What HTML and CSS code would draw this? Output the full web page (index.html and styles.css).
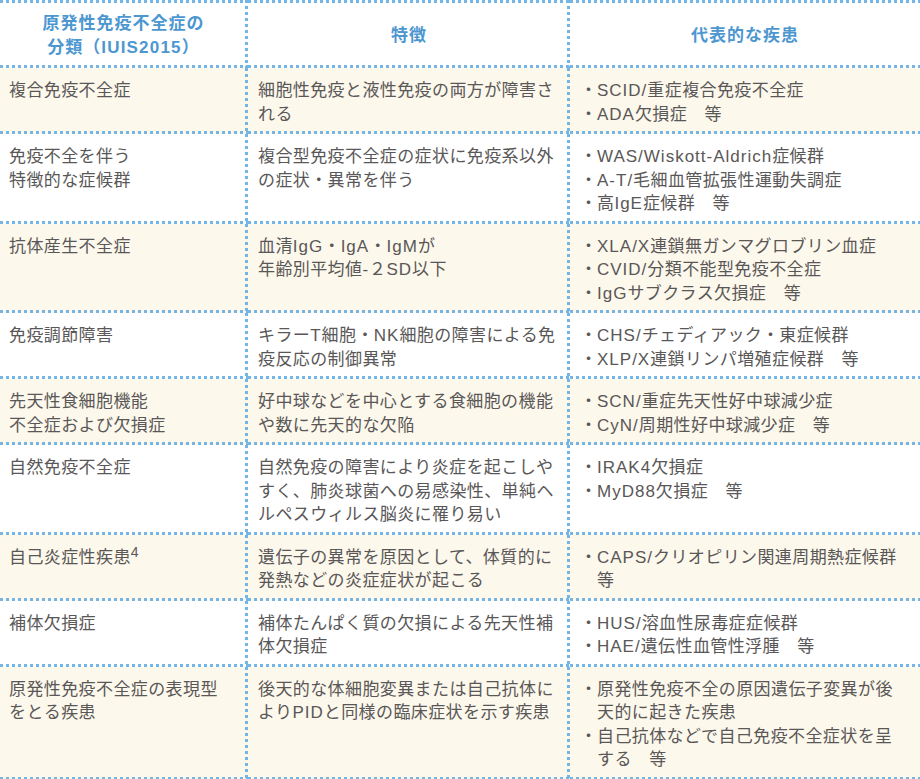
FILE: index.html
```html
<!DOCTYPE html>
<html lang="ja">
<head>
<meta charset="utf-8">
<title>原発性免疫不全症の分類</title>
<link rel="stylesheet" href="styles.css">
</head>
<body>
<table class="pid">
  <colgroup>
    <col class="w1"><col class="w2"><col class="w3">
  </colgroup>
  <thead>
    <tr>
      <th class="cl">原発性免疫不全症の<br>分類（<span class="en">IUIS2015</span>）</th>
      <th class="cm">特徴</th>
      <th class="cr">代表的な疾患</th>
    </tr>
  </thead>
  <tbody>
    <tr class="alt">
      <td class="cl">複合免疫不全症</td>
      <td class="cm">細胞性免疫と液性免疫の両方が障害さ<br>れる</td>
      <td class="cr"><ul class="list"><li><span class="dot">・</span><span><span class="en">SCID/</span>重症複合免疫不全症</span></li><li><span class="dot">・</span><span><span class="en">ADA</span>欠損症　等</span></li></ul></td>
    </tr>
    <tr>
      <td class="cl">免疫不全を伴う<br>特徴的な症候群</td>
      <td class="cm">複合型免疫不全症の症状に免疫系以外<br>の症状・異常を伴う</td>
      <td class="cr"><ul class="list"><li><span class="dot">・</span><span><span class="en">WAS/Wiskott-Aldrich</span>症候群</span></li><li><span class="dot">・</span><span><span class="en">A-T/</span>毛細血管拡張性運動失調症</span></li><li><span class="dot">・</span><span>高<span class="en">IgE</span>症候群　等</span></li></ul></td>
    </tr>
    <tr class="alt">
      <td class="cl">抗体産生不全症</td>
      <td class="cm">血清<span class="en">IgG</span>・<span class="en">IgA</span>・<span class="en">IgM</span>が<br>年齢別平均値<span class="en">-</span>２<span class="en">SD</span>以下</td>
      <td class="cr"><ul class="list"><li><span class="dot">・</span><span><span class="en">XLA/X</span>連鎖無ガンマグロブリン血症</span></li><li><span class="dot">・</span><span><span class="en">CVID/</span>分類不能型免疫不全症</span></li><li><span class="dot">・</span><span><span class="en">IgG</span>サブクラス欠損症　等</span></li></ul></td>
    </tr>
    <tr>
      <td class="cl">免疫調節障害</td>
      <td class="cm">キラー<span class="en">T</span>細胞・<span class="en">NK</span>細胞の障害による免<br>疫反応の制御異常</td>
      <td class="cr"><ul class="list"><li><span class="dot">・</span><span><span class="en">CHS/</span>チェディアック・東症候群</span></li><li><span class="dot">・</span><span><span class="en">XLP/X</span>連鎖リンパ増殖症候群　等</span></li></ul></td>
    </tr>
    <tr class="alt">
      <td class="cl">先天性食細胞機能<br>不全症および欠損症</td>
      <td class="cm">好中球などを中心とする食細胞の機能<br>や数に先天的な欠陥</td>
      <td class="cr"><ul class="list"><li><span class="dot">・</span><span><span class="en">SCN/</span>重症先天性好中球減少症</span></li><li><span class="dot">・</span><span><span class="en">CyN/</span>周期性好中球減少症　等</span></li></ul></td>
    </tr>
    <tr>
      <td class="cl">自然免疫不全症</td>
      <td class="cm">自然免疫の障害により炎症を起こしや<br>すく、肺炎球菌への易感染性、単純ヘ<br>ルペスウィルス脳炎に罹り易い</td>
      <td class="cr"><ul class="list"><li><span class="dot">・</span><span><span class="en">IRAK4</span>欠損症</span></li><li><span class="dot">・</span><span><span class="en">MyD88</span>欠損症　等</span></li></ul></td>
    </tr>
    <tr class="alt">
      <td class="cl">自己炎症性疾患<sup class="ref">4</sup></td>
      <td class="cm">遺伝子の異常を原因として、体質的に<br>発熱などの炎症症状が起こる</td>
      <td class="cr"><ul class="list"><li><span class="dot">・</span><span><span class="en">CAPS/</span>クリオピリン関連周期熱症候群<br>等</span></li></ul></td>
    </tr>
    <tr>
      <td class="cl">補体欠損症</td>
      <td class="cm">補体たんぱく質の欠損による先天性補<br>体欠損症</td>
      <td class="cr"><ul class="list"><li><span class="dot">・</span><span><span class="en">HUS/</span>溶血性尿毒症症候群</span></li><li><span class="dot">・</span><span><span class="en">HAE/</span>遺伝性血管性浮腫　等</span></li></ul></td>
    </tr>
    <tr class="alt">
      <td class="cl">原発性免疫不全症の表現型<br>をとる疾患</td>
      <td class="cm">後天的な体細胞変異または自己抗体に<br>より<span class="en">PID</span>と同様の臨床症状を示す疾患</td>
      <td class="cr"><ul class="list"><li><span class="dot">・</span><span>原発性免疫不全の原因遺伝子変異が後<br>天的に起きた疾患</span></li><li><span class="dot">・</span><span>自己抗体などで自己免疫不全症状を呈<br>する　等</span></li></ul></td>
    </tr>
  </tbody>
</table>
</body>
</html>
```

FILE: styles.css
```css
html, body {
  margin: 0;
  padding: 0;
  background: #ffffff;
}

body {
  font-family: "Noto Sans CJK JP", "Noto Sans", sans-serif;
  font-size: 17px;
  line-height: 23.5px;
  letter-spacing: 0.4px;
  color: #595757;
}

.en {
  font-family: "Liberation Sans", "Noto Sans CJK JP", sans-serif;
  letter-spacing: 1px;
  line-height: 1;
}

.pid {
  width: 920px;
  table-layout: fixed;
  border-collapse: separate;
  border-spacing: 0;
}

.w1 { width: 248px; }
.w2 { width: 322px; }
.w3 { width: 350px; }

.pid th,
.pid td {
  white-space: nowrap;
  vertical-align: top;
  text-align: left;
  padding: 9px 10px 10px 10px;
  background-image: linear-gradient(to right, #74b5e6 0 3px, transparent 3px 6px);
  background-size: 6px 3px;
  background-repeat: repeat-x;
  background-position: left bottom;
}

.pid td.cl,
.pid th.cl {
  padding-left: 9px;
}

.pid .cl,
.pid .cm {
  background-image:
    linear-gradient(to right, #74b5e6 0 3px, transparent 3px 6px),
    linear-gradient(to bottom, #74b5e6 0 3px, transparent 3px 6px);
  background-size: 6px 3px, 3px 6px;
  background-repeat: repeat-x, repeat-y;
  background-position: left bottom, right top;
}

.pid th {
  color: #4d97d1;
  font-weight: 700;
  letter-spacing: 1px;
  text-align: center;
  vertical-align: middle;
  padding: 10px 10px 11px 10px;
  background-image:
    linear-gradient(to right, #74b5e6 0 3px, transparent 3px 6px),
    linear-gradient(to right, #74b5e6 0 3px, transparent 3px 6px);
  background-size: 6px 3px, 6px 3px;
  background-repeat: repeat-x, repeat-x;
  background-position: left bottom, left top;
}

.pid th .en {
  letter-spacing: 1.2px;
}

.pid th.cl,
.pid th.cm {
  background-image:
    linear-gradient(to right, #74b5e6 0 3px, transparent 3px 6px),
    linear-gradient(to right, #74b5e6 0 3px, transparent 3px 6px),
    linear-gradient(to bottom, #74b5e6 0 3px, transparent 3px 6px);
  background-size: 6px 3px, 6px 3px, 3px 6px;
  background-repeat: repeat-x, repeat-x, repeat-y;
  background-position: left bottom, left top, right top;
}

.pid tr.alt {
  background-color: #fdf8ec;
}

.list {
  list-style: none;
  margin: 0;
  padding: 0;
}

.list li {
  display: flex;
}

.dot {
  flex: none;
  width: 17px;
  letter-spacing: 0;
}

.ref {
  font-family: "Liberation Sans", sans-serif;
  font-size: 14px;
  line-height: 0;
  vertical-align: 6px;
  letter-spacing: 0;
}
```
